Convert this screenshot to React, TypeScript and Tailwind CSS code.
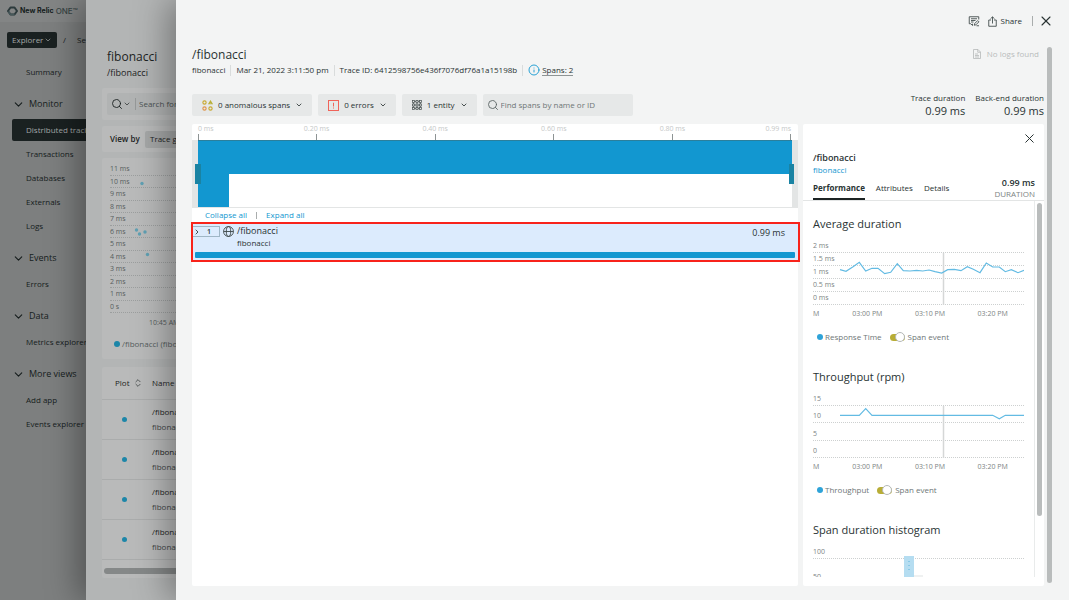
import React, { useState } from "react";
import clsx from "clsx";
import { ChevronDown, ChevronRight, ChevronsUpDown, Info, Search, X } from "lucide-react";

interface NavGroup {
  title: string;
  items: string[];
}

const navGroups: NavGroup[] = [
  {
    title: "Monitor",
    items: ["Distributed tracing", "Transactions", "Databases", "Externals", "Logs"],
  },
  { title: "Events", items: ["Errors"] },
  { title: "Data", items: ["Metrics explorer"] },
  { title: "More views", items: ["Add app", "Events explorer"] },
];

const msLabels = [
  "11 ms", "10 ms", "9 ms", "8 ms", "7 ms", "6 ms",
  "5 ms", "4 ms", "3 ms", "2 ms", "1 ms", "0 s",
];

const timeTicks = ["0.20 ms", "0.40 ms", "0.60 ms", "0.80 ms"];

const responseTime =
  "27,16.7 33,18.3 39.7,14 46.3,9.3 52.7,18 59,15.3 65,15.3 71.7,20.7 77.7,19.3 84.3,10.7 90.3,17.7 97,18 103.7,17.3 109.7,18 116,17 122,18.7 128.7,20 134.7,16.7 141.3,16.3 148,17.7 154.3,13.7 160.3,16.3 167,19.7 173.3,10 179.7,14 186.3,14 192.3,18.7 198.3,16.7 205,19.7 211,17.3";

const throughput =
  "27,9.3 46.3,9.3 52.7,2.7 59,9.3 179.7,9.3 186.3,12.7 192.3,9.3 211,9.3";

const LogoMark = () => (
  <svg className="w-[11px] h-[10px]" viewBox="0 0 22 20" fill="none">
    <path d="M7 3h8l5 7-5 7H7l-5-7z" stroke="#2c3a3c" strokeWidth="4" strokeLinejoin="round" />
    <path d="M3 11l4 6h8" stroke="#46585a" strokeWidth="3" strokeLinejoin="round" />
  </svg>
);

const CommentIcon = () => (
  <svg className="w-3 h-3" viewBox="0 0 24 24" fill="none" stroke="#3a4444" strokeWidth="1.7">
    <path d="M9 17.500v3.500l-3.500-3.500h-3v-14h19V9" />
    <path d="M6 7.500h12M6 11h9M6 14h5" />
    <path d="M12.500 20.500l.8-3.300 6-6 2.500 2.500-6 6z" />
    <path d="M17 21.500h5" />
  </svg>
);

const ShareIcon = () => (
  <svg className="w-[9px] h-[11px]" viewBox="0 0 18 22" fill="none" stroke="#3a4444" strokeWidth="1.7">
    <path d="M6 8H1.500v12.500h15V8H12" />
    <path d="M9 15V2M5 5.500L9 1.700l4 3.800" />
  </svg>
);

const LogFileIcon = () => (
  <svg className="w-[8px] h-[10px]" viewBox="0 0 16 20" fill="none" stroke="#b9bcbc" strokeWidth="1.7">
    <path d="M1 1h9l5 5v13H1z" />
    <path d="M9.500 1v5.500H15M4 10h6M4 13h8M4 16h8" />
  </svg>
);

const AnomalyIcon = () => (
  <svg className="w-[11px] h-[11px]" viewBox="0 0 22 22" fill="none" strokeWidth="2.200">
    <circle cx="5" cy="5" r="3.300" stroke="#c9a92f" />
    <path d="M17 2l3.300 5.500h-6.600z" stroke="#b9b03a" />
    <circle cx="5" cy="17" r="3.300" stroke="#e0954a" />
    <circle cx="17" cy="17" r="3.300" stroke="#c9a92f" />
  </svg>
);

const ErrorIcon = () => (
  <svg className="w-[11px] h-[11px]" viewBox="0 0 22 22" fill="none" stroke="#f0645a" strokeWidth="2">
    <rect x="1" y="1" width="20" height="20" />
    <path d="M11 5.500v7.500M11 15v2" />
  </svg>
);

const EntityIcon = () => (
  <svg className="w-[10px] h-[10px]" viewBox="0 0 20 20" fill="none" stroke="#4c5555" strokeWidth="1.500">
    {[1, 8, 15].map((y) =>
      [1, 8, 15].map((x) => <rect key={`${x}-${y}`} x={x} y={y} width="4" height="4" />)
    )}
    <path d="M5 3h3M12 3h3M5 10h3M12 10h3M5 17h3M12 17h3M3 5v3M3 12v3M10 5v3M10 12v3M17 5v3M17 12v3" />
  </svg>
);

const GlobeIcon = () => (
  <svg className="w-[11px] h-[11px]" viewBox="0 0 20 20" fill="none" stroke="#3a4444" strokeWidth="1.600">
    <circle cx="10" cy="10" r="9" />
    <ellipse cx="10" cy="10" rx="4" ry="9" />
    <path d="M1 10h18" />
  </svg>
);

const Sidebar = () => (
  <aside className="w-[86px] shrink-0 overflow-hidden bg-[#7d7f7f] text-[#161d1d] whitespace-nowrap">
    <div className="flex h-[22px] items-center gap-[2px] pl-[7px] bg-[#838585] font-['Inter',sans-serif]">
      <LogoMark />
      <span className="text-[7px] font-bold">New Relic</span>
      <span className="text-[8px] font-medium text-[#364343]">ONE™</span>
    </div>
    <div className="flex h-9 items-center pl-[7px] text-[8px]">
      <button className="flex h-4 w-[50px] shrink-0 items-center justify-between rounded-[2px] bg-[#1a2121] px-[5px] text-[#a3a7a7]">
        Explorer
        <ChevronDown className="size-[8px]" />
      </button>
      <span className="w-5 shrink-0 pl-[6px]">/</span>
      <span>Select entity</span>
    </div>
    <nav className="w-[150px] pt-[2px] text-[8px]">
      <a href="#summary" className="flex h-6 items-center pl-[26px]">Summary</a>
      {navGroups.map((group) => (
        <div key={group.title}>
          <button className="mt-1.5 flex h-7 items-center gap-[4px] pl-[12px] text-[9px]">
            <ChevronDown className="size-[13px]" strokeWidth={2} />
            {group.title}
          </button>
          {group.items.map((item) => {
            const active = item === "Distributed tracing";
            return (
              <a
                key={item}
                href="#nav"
                className={clsx(
                  "flex items-center",
                  active
                    ? "my-px ml-3 h-[22px] rounded-[2px] bg-[#1a2121] pl-[14px] font-medium text-[#a3a7a7]"
                    : "h-6 pl-[26px]"
                )}
              >
                {item}
              </a>
            );
          })}
        </div>
      ))}
    </nav>
  </aside>
);

const TraceListPanel = () => (
  <section className="relative z-10 w-[90px] shrink-0 overflow-clip bg-[#b3b5b5] text-[#1c2323] shadow-[-8px_0_32px_rgba(0,0,0,0.35)] whitespace-nowrap">
    <div className="w-[420px] pt-[49px] pl-4 text-[8px]">
      <div className="pl-[5px]">
        <h2 className="text-[12px] leading-[16px]">fibonacci</h2>
        <p className="text-[9px] leading-[16px]">/fibonacci</p>
      </div>

      <div className="mt-[7px] rounded-[2px] bg-[#b9baba] p-[5px]">
        <label className="flex h-[22px] items-center rounded-[2px] bg-[#b1b3b3] pl-1">
          <Search className="size-3 shrink-0" strokeWidth={1.8} />
          <ChevronDown className="size-[8px] shrink-0" />
          <input
            aria-label="Search for traces"
            placeholder="Search for traces"
            className="ml-[4px] h-3 border-l border-[#969999] pl-[3px] outline-none placeholder:text-[#4b5252]"
          />
        </label>
      </div>

      <div className="mt-[6px] flex h-[26px] items-center rounded-[2px] bg-[#b9baba] pl-2">
        <span className="w-[35px] font-semibold">View by</span>
        <button className="h-[17px] rounded-[2px] bg-[#a5a7a7] px-[5px]">Trace groups</button>
      </div>

      <div className="mt-[6px] h-[201px] rounded-[2px] bg-[#b9baba] pt-[5px] pl-2 text-[#565d5d]">
        <div className="relative flex h-[150px] flex-col text-[7px]">
          {msLabels.map((label) => (
            <div
              key={label}
              className="flex flex-1 items-center border-b border-dotted border-[#9b9e9e] leading-none last:border-solid"
            >
              {label}
            </div>
          ))}
          <svg className="absolute top-0 left-0 h-[150px] w-[80px]" viewBox="0 0 80 150" fill="#5fa0b3">
            <circle cx="32" cy="20.500" r="1.700" />
            <circle cx="26.500" cy="67" r="1.700" />
            <circle cx="29.500" cy="71" r="1.700" />
            <circle cx="35" cy="69" r="1.700" />
            <circle cx="37.500" cy="91.500" r="1.700" />
          </svg>
        </div>
        <div className="pt-[4px] pl-[39px] text-[7px] leading-[12px]">10:45 AM</div>
        <div className="mt-[9px] flex items-center gap-[2px] pl-[4px] leading-[12px]">
          <span className="size-[6px] rounded-full bg-[#1c86a8]" />
          /fibonacci (fibonacci)
        </div>
      </div>

      <div className="mt-2 rounded-[2px] bg-[#b9baba] pb-[4px]">
        <table className="w-full text-left">
          <thead>
            <tr className="h-8 border-b border-[#aaacac]">
              <th className="w-[50px] pl-[13px] font-normal">
                <span className="flex items-center gap-[3px]">
                  Plot <ChevronsUpDown className="size-[10px]" strokeWidth={1.5} />
                </span>
              </th>
              <th className="font-normal">Name</th>
            </tr>
          </thead>
          <tbody>
            {[1, 2, 3, 4].map((row) => (
              <tr key={row} className="h-10 border-b border-[#aaacac]">
                <td>
                  <span className="ml-[20px] block size-[5px] rounded-full bg-[#1c86a8]" />
                </td>
                <td className="leading-[15px]">
                  <div>/fibonacci</div>
                  <div className="text-[#3f4747]">fibonacci</div>
                </td>
              </tr>
            ))}
          </tbody>
        </table>
        <div className="mt-[8px] ml-[2px] h-[6px] rounded-full bg-[#858888]" />
      </div>
    </div>
  </section>
);

interface StatProps {
  label: string;
  value: string;
}

const Stat: React.FC<StatProps> = ({ label, value }) => (
  <div className="text-right">
    <div className="leading-[12px]">{label}</div>
    <div className="text-[11px] leading-[14px]">{value}</div>
  </div>
);

interface FilterButtonProps {
  icon: React.ReactNode;
  children: React.ReactNode;
}

const FilterButton: React.FC<FilterButtonProps> = ({ icon, children }) => (
  <button className="flex h-[22px] items-center gap-[5px] rounded-[2px] bg-[#e6e8e8] pr-[9px] pl-[10px]">
    {icon}
    {children}
    <ChevronDown className="size-[8px]" strokeWidth={2.5} />
  </button>
);

const Timeline = () => (
  <div>
    <div className="mr-[7px] ml-[6px] flex h-4 justify-between text-[7px] leading-[10px] text-[#c5c8c8] whitespace-nowrap">
      <div className="flex w-0 flex-col justify-between">
        <span>0 ms</span>
        <span className="h-[6px] w-px bg-[#8e9494]" />
      </div>
      {timeTicks.map((tick) => (
        <div key={tick} className="flex w-0 flex-col items-center justify-between">
          <span>{tick}</span>
          <span className="h-[6px] w-px bg-[#8e9494]" />
        </div>
      ))}
      <div className="flex w-0 flex-col items-end justify-between">
        <span>0.99 ms</span>
        <span className="h-[6px] w-px bg-[#8e9494]" />
      </div>
    </div>
    <div className="relative h-[68px] border-x-[6px] border-b border-x-[#e3e5e5] border-b-[#e3e5e5]">
      <div className="h-[34px] border-t border-[#2b7f9c] bg-[#1297d0]" />
      <div className="h-[33px] w-[31px] bg-[#1297d0]" />
      <span className="absolute top-6 -left-[3px] h-5 w-[6px] bg-[#1a83a3]" />
      <span className="absolute top-6 -right-[2px] h-5 w-[5px] bg-[#1a83a3]" />
    </div>
  </div>
);

const SpanRow = () => (
  <div className="-mr-[2px] -ml-px h-10 border-2 border-[#f8231b] bg-[#dcebfd]">
    <div className="flex h-7 items-start">
      <button className="mt-[2px] flex h-[11px] w-[27px] items-center gap-[6px] border border-l-0 border-[#9fb6c6] text-[7px] font-semibold leading-none">
        <ChevronRight className="size-[8px]" strokeWidth={2.5} />1
      </button>
      <span className="mt-[2px] ml-[3px]">
        <GlobeIcon />
      </span>
      <div className="ml-[3px] flex-1">
        <div className="text-[9px] leading-[14px]">/fibonacci</div>
        <div className="leading-[10px]">fibonacci</div>
      </div>
      <span className="mt-[2px] mr-[13px] text-[9px] leading-[14px]">0.99 ms</span>
    </div>
    <div className="mr-[3px] ml-[2px] h-[6px] rounded-[1px] bg-[#1297d0]" />
  </div>
);

interface MetricChartProps {
  title: string;
  series: string;
  labels: string[];
  points: string;
}

const MetricChart: React.FC<MetricChartProps> = ({ title, series, labels, points }) => {
  const [showEvent, setShowEvent] = useState(true);
  const [first, ...rest] = labels;

  return (
    <section className="h-[153px]">
      <h3 className="text-[11px] leading-[16px]">{title}</h3>
      <div className="mt-[8px] text-[7px] leading-[12px] text-[#7d8484]">
        <div className="h-[13px] border-b border-dotted border-[#cdd0d0]">{first}</div>
        <div className="relative flex h-[52px] flex-col">
          {rest.map((label) => (
            <div
              key={label}
              className="flex flex-1 items-end border-b border-dotted border-[#cdd0d0] last:border-solid"
            >
              {label}
            </div>
          ))}
          <svg
            className="absolute inset-0 h-full w-full"
            viewBox="0 0 211 52"
            preserveAspectRatio="none"
            fill="none"
          >
            <path d="M130.500 0v52" stroke="#d5d7d7" strokeWidth="1.500" />
            <polyline points={points} stroke="#63bbe3" strokeWidth="1.200" />
          </svg>
        </div>
        <div className="flex pt-[3px]">
          <span className="w-[23px]">M</span>
          <span className="flex-1 text-center">03:00 PM</span>
          <span className="flex-1 text-center">03:10 PM</span>
          <span className="flex-1 text-center">03:20 PM</span>
        </div>
      </div>
      <div className="mt-[10px] flex items-center pl-[4px] leading-[14px] text-[#6e7676]">
        <span className="mr-[2px] size-[6px] rounded-full bg-[#2fa3d8]" />
        {series}
        <label className="ml-2 flex items-center gap-[3px]">
          <input
            type="checkbox"
            checked={showEvent}
            onChange={(e) => setShowEvent(e.target.checked)}
            className="flex h-[7px] w-[15px] appearance-none items-center rounded-full bg-[#d5d8d8] checked:justify-end checked:bg-[#b8ad36] after:size-[10px] after:shrink-0 after:rounded-full after:border after:border-[#b4b8b8] after:bg-white after:content-['']"
          />
          Span event
        </label>
      </div>
    </section>
  );
};

const DetailsPanel = () => (
  <aside className="flex w-[241px] shrink-0 flex-col rounded-[2px] bg-white pb-[9px]">
    <div className="flex h-[77px] flex-col border-b border-[#e3e5e5] pr-[9px] pl-[10px]">
      <button aria-label="Close details" className="mt-[7px] -mr-[2px] self-end">
        <X className="size-[15px]" strokeWidth={1.6} />
      </button>
      <h2 className="mt-[5px] text-[9px] font-semibold leading-[13px]">/fibonacci</h2>
      <a href="#entity" className="leading-[12px] text-[#1297d0]">fibonacci</a>
      <div className="flex flex-1 items-end justify-between">
        <div className="flex gap-[11px] leading-[12px]">
          <button className="border-b-2 border-[#1c2323] pb-[4px] font-bold">Performance</button>
          <button className="border-b-2 border-transparent pb-[4px]">Attributes</button>
          <button className="border-b-2 border-transparent pb-[4px]">Details</button>
        </div>
        <div className="pb-px text-right leading-[11px]">
          <div className="text-[9px] font-semibold">0.99 ms</div>
          <div className="text-[#7d8484]">DURATION</div>
        </div>
      </div>
    </div>
    <div className="flex min-h-0 flex-1">
      <div className="min-w-0 flex-1 overflow-hidden pt-[15px] pr-[10px] pl-[10px]">
        <MetricChart
          title="Average duration"
          series="Response Time"
          labels={["2 ms", "1.5 ms", "1 ms", "0.5 ms", "0 ms"]}
          points={responseTime}
        />
        <MetricChart
          title="Throughput (rpm)"
          series="Throughput"
          labels={["15", "10", "5", "0"]}
          points={throughput}
        />
        <h3 className="text-[11px] leading-[16px]">Span duration histogram</h3>
        <div className="relative mt-[8px] text-[7px] leading-[12px] text-[#7d8484]">
          <div className="h-[13px] border-b border-dotted border-[#cdd0d0]">100</div>
          <div className="flex h-6 items-end">50</div>
          <svg className="absolute top-0 left-0 h-[37px] w-full" viewBox="0 0 211 37" preserveAspectRatio="none">
            <rect x="91" y="10" width="10" height="27" fill="#b5ddf1" />
            <path d="M96 15v1M96 19v1M96 23v1" stroke="#58b4de" />
            <rect x="101" y="29" width="9" height="8" fill="#eff1f1" />
          </svg>
        </div>
      </div>
      <div className="w-[10px] border-l border-[#e9ebeb] pt-[2px] pl-[2px]">
        <div className="h-[313px] w-[5px] rounded-full bg-[#b9bcbc]" />
      </div>
    </div>
  </aside>
);

const TraceModal = () => (
  <main className="relative z-20 flex min-w-0 flex-1 flex-col bg-[#f3f4f4] pt-[14px] pb-[14px] pl-4 text-[8px] text-[#293333] shadow-[-8px_0_32px_rgba(0,0,0,0.35)]">
    <header className="flex h-[14px] items-center justify-end pr-[15px]">
      <button aria-label="Feedback">
        <CommentIcon />
      </button>
      <button className="ml-2 flex items-center gap-[4px]">
        <ShareIcon />
        Share
      </button>
      <span className="mr-[5px] ml-[10px] h-[10px] w-px bg-[#a9adad]" />
      <button aria-label="Close">
        <X className="size-4" strokeWidth={1.6} />
      </button>
    </header>

    <div className="mt-[19px] flex min-h-0 flex-1 pr-[17px]">
      <div className="flex min-w-0 flex-1 flex-col">
        <div className="flex items-start justify-between">
          <h1 className="text-[12px] leading-[16px]">/fibonacci</h1>
          <span className="flex items-center gap-[6px] pr-[5px] leading-[14px] text-[#b9bcbc]">
            <LogFileIcon />
            No logs found
          </span>
        </div>
        <div className="flex h-[14px] items-center">
          <span>fibonacci</span>
          <span className="mx-[5px] h-[11px] w-px bg-[#d9dcdc]" />
          <span>Mar 21, 2022 3:11:50 pm</span>
          <span className="mx-[5px] h-[11px] w-px bg-[#d9dcdc]" />
          <span>Trace ID: 6412598756e436f7076df76a1a15198b</span>
          <span className="mx-[5px] h-[11px] w-px bg-[#d9dcdc]" />
          <Info className="size-3 text-[#1297d0]" strokeWidth={1.8} />
          <a href="#spans" className="ml-[2px] border-b border-[#8e9494] leading-[10px]">Spans: 2</a>
        </div>

        <div className="mt-[15px] flex h-[26px] items-center justify-between">
          <div className="flex gap-[6px]">
            <FilterButton icon={<AnomalyIcon />}>0 anomalous spans</FilterButton>
            <FilterButton icon={<ErrorIcon />}>0 errors</FilterButton>
            <FilterButton icon={<EntityIcon />}>1 entity</FilterButton>
            <label className="flex h-[22px] w-[150px] items-center gap-[2px] rounded-[2px] bg-[#e6e8e8] px-[4px]">
              <Search className="size-3 shrink-0 text-[#5c6565]" strokeWidth={1.8} />
              <input
                aria-label="Find spans by name or ID"
                placeholder="Find spans by name or ID"
                className="min-w-0 flex-1 outline-none placeholder:text-[#6e7676]"
              />
            </label>
          </div>
          <div className="flex gap-[10px]">
            <Stat label="Trace duration" value="0.99 ms" />
            <Stat label="Back-end duration" value="0.99 ms" />
          </div>
        </div>

        <div className="mt-[6px] flex min-h-0 flex-1 gap-[5px]">
          <section className="min-w-0 flex-1 rounded-[2px] bg-white">
            <Timeline />
            <div className="flex h-[14px] items-center gap-[9px] pl-[13px] text-[#1297d0]">
              <button>Collapse all</button>
              <span className="h-[7px] w-px bg-[#a9adad]" />
              <button>Expand all</button>
            </div>
            <SpanRow />
          </section>
          <DetailsPanel />
        </div>
      </div>
      <div className="mb-[3px] ml-[3px] w-[5px] rounded-full bg-[#b9bcbc]" />
    </div>
  </main>
);

const App = () => (
  <div className="flex h-screen overflow-hidden font-['Open_Sans',sans-serif]">
    <Sidebar />
    <TraceListPanel />
    <TraceModal />
  </div>
);

export default App;
